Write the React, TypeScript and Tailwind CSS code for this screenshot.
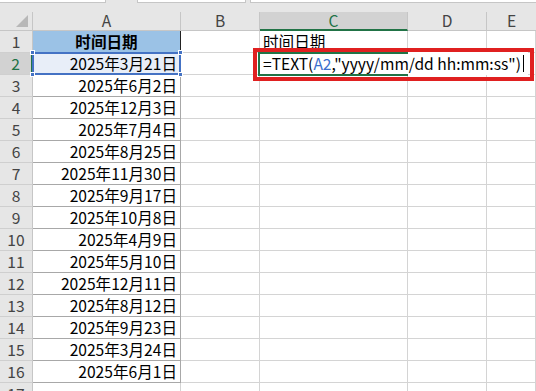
const dates = [
  "2025年3月21日",
  "2025年6月2日",
  "2025年12月3日",
  "2025年7月4日",
  "2025年8月25日",
  "2025年11月30日",
  "2025年9月17日",
  "2025年10月8日",
  "2025年4月9日",
  "2025年5月10日",
  "2025年12月11日",
  "2025年8月12日",
  "2025年9月23日",
  "2025年3月24日",
  "2025年6月1日",
];

const cols = "grid grid-cols-[33px_148px_79px_148px_79px_49px]";
const cell = "h-[22px] border-r border-b border-[#d4d4d4] bg-white";
const aCell =
  "h-[22px] border-r border-b border-[#a8a8a8] bg-white flex items-center justify-end pr-[3px]";

const RowHead = ({ n, active }: { n: number; active?: boolean }) => (
  <div
    className={`h-[22px] border-b border-[#cfcfcf] flex items-center justify-center ${
      active
        ? "bg-[#d2d2d2] text-[#217346] border-r-2 border-r-[#217346]"
        : "bg-[#e6e6e6] text-[#444] border-r border-r-[#c6c6c6]"
    }`}
  >
    {n}
  </div>
);

const Handle = ({ pos }: { pos: string }) => (
  <div className={`absolute w-[5px] h-[5px] bg-[#4472c4] border border-white z-20 ${pos}`} />
);

export default function App() {
  return (
    <div
      className="relative w-[536px] h-[391px] overflow-hidden bg-white text-[15.6px] text-black"
      style={{ fontFamily: '"Noto Sans CJK SC", "Microsoft YaHei", sans-serif' }}
    >
      {/* ribbon edge */}
      <div className="h-[12px] bg-[#e6e6e6] flex items-start">
        <div className="w-[106px] h-[3px] bg-white border-b border-r border-[#c6c6c6]" />
        <div className="w-[109px] h-[3px] bg-white border-b border-x border-[#c6c6c6] ml-[31px]" />
        <div className="flex-1 h-[3px] bg-white border-b border-l border-[#c6c6c6] ml-[4px]" />
      </div>

      {/* column headers */}
      <div className={`${cols} h-[19px] bg-[#e6e6e6] text-[#444] leading-none`}>
        <div className="border-r border-b border-[#c6c6c6] relative">
          <div className="absolute right-[4px] bottom-[3px] w-0 h-0 border-l-[12px] border-l-transparent border-b-[12px] border-b-[#b8b8b8]" />
        </div>
        <div className="border-r border-b border-[#c6c6c6] flex items-center justify-center">A</div>
        <div className="border-r border-b border-[#c6c6c6] flex items-center justify-center">B</div>
        <div className="border-r border-[#c6c6c6] border-b-2 border-b-[#217346] bg-[#d2d2d2] text-[#217346] flex items-center justify-center">
          C
        </div>
        <div className="border-r border-b border-[#c6c6c6] flex items-center justify-center">D</div>
        <div className="border-b border-[#c6c6c6] flex items-center justify-center">E</div>
      </div>

      {/* row 1 */}
      <div className={cols}>
        <RowHead n={1} />
        <div className="h-[22px] border-r border-r-[#222] border-b border-b-[#a8a8a8] bg-[#9bc2e6] flex items-center justify-center font-bold">
          时间日期
        </div>
        <div className={cell} />
        <div className={`${cell} flex items-center pl-[3px]`}>时间日期</div>
        <div className={cell} />
        <div className={cell} />
      </div>

      {/* row 2 */}
      <div className={cols}>
        <RowHead n={2} active />
        <div className="relative h-[22px] border-r border-b border-[#a8a8a8] bg-[#e8eef8] flex items-center justify-end pr-[3px]">
          {dates[0]}
          <div className="absolute -left-px -top-px -right-px -bottom-px border-2 border-[#4472c4] z-10" />
          <Handle pos="-left-[3px] -top-[3px]" />
          <Handle pos="-right-[3px] -top-[3px]" />
          <Handle pos="-left-[3px] -bottom-[3px]" />
          <Handle pos="-right-[3px] -bottom-[3px]" />
        </div>
        <div className={cell} />
        <div className={`${cell} relative`}>
          <div className="absolute -left-px -top-px h-[23px] w-[269px] bg-white z-10 flex items-center pl-[4px] whitespace-nowrap">
            <span>=TEXT(</span>
            <span className="text-[#3b6fcd]">A2</span>
            <span>,"yyyy/mm/dd hh:mm:ss")</span>
            <span className="inline-block w-px h-[17px] bg-black ml-[2px]" />
          </div>
          <div className="absolute -left-[2px] -top-px w-[150px] h-[24px] border-2 border-[#217346] border-r-0 z-10" />
        </div>
        <div className={cell} />
        <div className={cell} />
      </div>

      {/* rows 3-17 */}
      {dates.slice(1).map((d, i) => (
        <div key={i} className={cols}>
          <RowHead n={i + 3} />
          <div className={aCell}>{d}</div>
          <div className={cell} />
          <div className={cell} />
          <div className={cell} />
          <div className={cell} />
        </div>
      ))}
      <div className={cols}>
        <RowHead n={17} />
        <div className={cell} />
        <div className={cell} />
        <div className={cell} />
        <div className={cell} />
        <div className={cell} />
      </div>

      {/* annotation box */}
      <div className="absolute left-[253px] top-[48px] w-[281px] h-[33px] border-4 border-[#e02020] z-30" />
    </div>
  );
}
